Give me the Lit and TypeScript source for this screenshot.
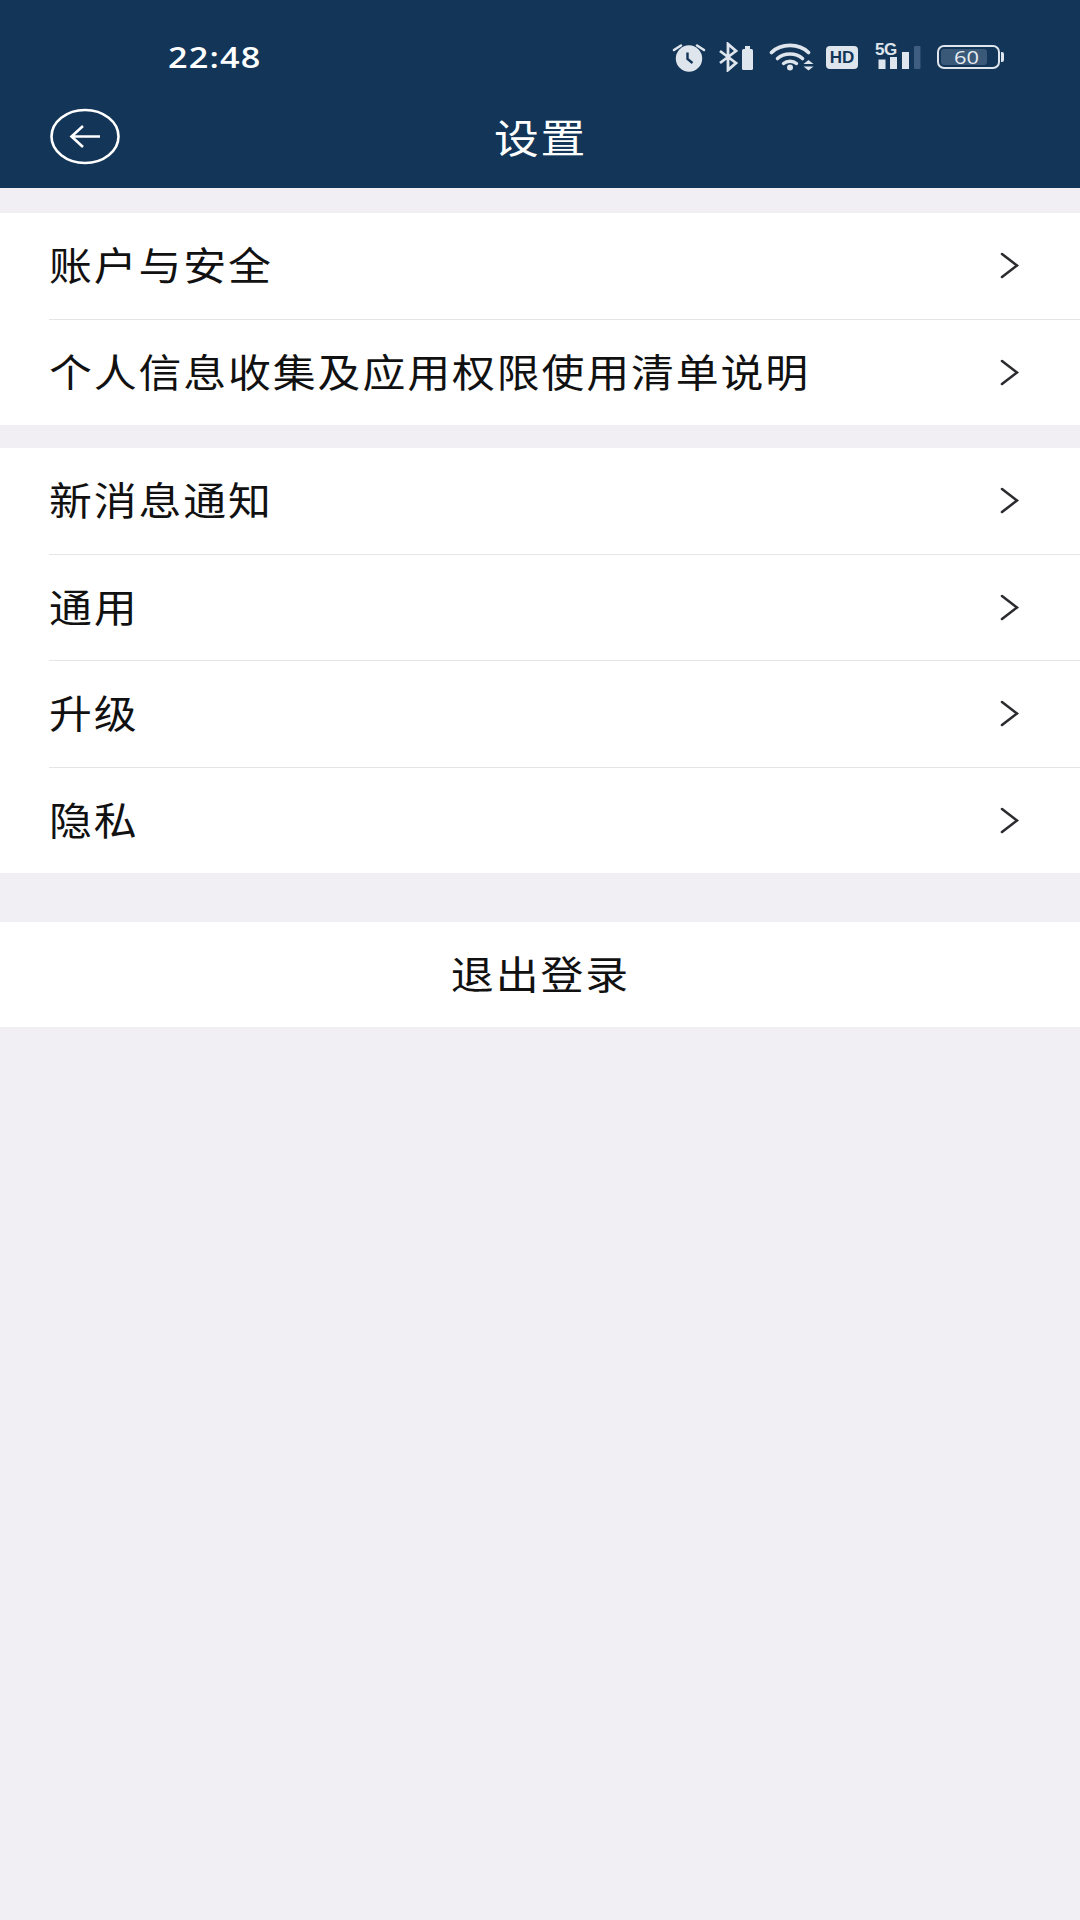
import { LitElement, html, css, svg } from 'lit';
import { customElement } from 'lit/decorators.js';

const chevron = html`<svg class="chevron" width="19" height="27" viewBox="0 0 19 27">
  <path d="M2 2 L17 13.5 L2 25" fill="none" stroke="#2c2c30" stroke-width="2.6" stroke-linecap="round" stroke-linejoin="miter"/>
</svg>`;

const alarm = svg`<svg width="34" height="30" viewBox="0 0 34 30">
  <path d="M2 8 L9 3.5 M32 8 L25 3.5" stroke="#dfe5ec" stroke-width="2.6" stroke-linecap="round"/>
  <circle cx="17" cy="16.5" r="13.2" fill="#dfe5ec"/>
  <path d="M15.5 10.5 V17 L20.5 21" fill="none" stroke="#123558" stroke-width="2.4"/>
</svg>`;

const bluetooth = svg`<svg width="36" height="30" viewBox="0 0 36 30">
  <path d="M2 9 L18 21 L10 28 V2 L18 9 L2 21" fill="none" stroke="#dfe5ec" stroke-width="2.8"/>
  <rect x="24" y="7" width="11" height="21" rx="1.5" fill="#dfe5ec"/>
  <rect x="27" y="4" width="5" height="4" fill="#dfe5ec"/>
</svg>`;

const wifi = svg`<svg width="46" height="28" viewBox="0 0 46 28">
  <path d="M3.5 9.5 C13 0 31 0 40.5 9.5" fill="none" stroke="#dfe5ec" stroke-width="3.8" stroke-linecap="round"/>
  <path d="M9.5 15.5 C16 9.5 28 9.5 34.5 15.5" fill="none" stroke="#dfe5ec" stroke-width="3.6" stroke-linecap="round"/>
  <path d="M15.5 20.5 C19 17.5 25 17.5 28.5 20.5" fill="none" stroke="#dfe5ec" stroke-width="3.4" stroke-linecap="round"/>
  <circle cx="22" cy="24.5" r="3" fill="#dfe5ec"/>
  <path d="M35.5 21 L40.5 17 L45.5 21 Z M35.5 23.5 L45.5 23.5 L40.5 27.5 Z" fill="#dfe5ec"/>
</svg>`;

// four signal bars, the last one is the unreached level
const signal = svg`<svg width="46" height="25" viewBox="0 0 46 25">
  <rect x="3.5" y="15.5" width="7" height="9.5" fill="#dfe5ec"/>
  <rect x="15" y="13" width="7" height="12" fill="#dfe5ec"/>
  <rect x="27" y="8" width="7" height="17" fill="#dfe5ec"/>
  <rect x="39" y="2" width="6.5" height="23" rx="1" fill="#3f5d7e"/>
</svg>`;

@customElement('app-root')
export class AppRoot extends LitElement {
  static styles = css`
    :host {
      display: block;
      width: 1080px;
      height: 1920px;
      background: #f1eff3;
      font-family: 'Noto Sans CJK SC', 'Liberation Sans', sans-serif;
      overflow: hidden;
    }
    .header {
      height: 188px;
      background: #123558;
      color: #fff;
    }
    .status {
      height: 92px;
      padding: 22px 76px 0 168px;
      box-sizing: border-box;
      display: flex;
      align-items: center;
      justify-content: space-between;
    }
    .time {
      font: 600 29px/1 'Open Sans', sans-serif;
      letter-spacing: 1px;
      color: #fff;
      margin-top: -2px;
      transform: scaleX(1.18);
      transform-origin: left center;
    }
    .icons {
      display: flex;
      align-items: center;
    }
    .icons svg { display: block; }
    .alarm { margin-right: 12px; }
    .bt { margin-right: 14px; }
    .wifi { margin-right: 12px; }
    .hd {
      width: 32px;
      height: 23px;
      border-radius: 4px;
      background: #dfe5ec;
      color: #123558;
      font: 700 17px/23px 'Liberation Sans', sans-serif;
      text-align: center;
      margin-right: 17px;
    }
    .net {
      position: relative;
      width: 46px;
      height: 26px;
      margin-right: 16px;
    }
    .net-label {
      position: absolute;
      left: 0;
      top: -1px;
      font: 700 17px/14px 'Liberation Sans', sans-serif;
      letter-spacing: -0.5px;
      color: #dfe5ec;
    }
    .net svg { position: absolute; left: 0; bottom: 1px; }
    .battery {
      display: flex;
      align-items: center;
    }
    .battery-body {
      width: 63px;
      height: 24px;
      box-sizing: border-box;
      border: 2px solid #dfe5ec;
      border-radius: 7px;
      padding: 2px;
    }
    .battery-fill {
      width: 84%;
      height: 100%;
      border-radius: 3px;
      background: #3a5878;
      position: relative;
    }
    .battery-text {
      position: absolute;
      left: 13px;
      top: -1px;
      font: 400 19px/18px 'Open Sans', sans-serif;
      color: #e6ebf0;
      transform: scaleX(1.15);
      transform-origin: left center;
    }
    .battery-tip {
      width: 3px;
      height: 10px;
      margin-left: 1px;
      background: #dfe5ec;
      border-radius: 0 2px 2px 0;
    }
    .nav {
      height: 96px;
      display: grid;
      grid-template-columns: 1fr auto 1fr;
      align-items: center;
      padding: 0 50px;
      box-sizing: border-box;
    }
    .back { display: block; margin-top: -8px; }
    .title {
      font-size: 40px;
      line-height: 1;
      letter-spacing: 1.5px;
      margin-right: -1.5px;
      margin-top: -8px;
      transform: scaleX(1.12);
    }
    .group {
      background: #fff;
      padding-left: 49px;
    }
    .group.account { margin-top: 25px; }
    .group.general { margin-top: 23px; }
    .row {
      height: 106.5px;
      display: flex;
      align-items: center;
      justify-content: space-between;
      padding-right: 61px;
      box-sizing: border-box;
      border-bottom: 1px solid #e5e5e7;
    }
    .row:last-child { height: 105.5px; border-bottom: none; }
    .label {
      font-size: 39px;
      line-height: 1;
      letter-spacing: 1.7px;
      color: #111;
      white-space: nowrap;
      margin-top: -4px;
      transform: scaleX(1.1);
      transform-origin: left center;
    }
    .logout {
      margin-top: 49px;
      height: 105px;
      background: #fff;
      display: flex;
      align-items: center;
      justify-content: center;
      color: #111;
    }
    .logout span {
      font-size: 39px;
      line-height: 1;
      letter-spacing: 1.7px;
      margin-right: -1.7px;
      margin-top: -4px;
      transform: scaleX(1.1);
    }
  `;

  private rows(kind: string, items: string[]) {
    return html`<div class="group ${kind}">
      ${items.map((t) => html`<div class="row"><span class="label">${t}</span>${chevron}</div>`)}
    </div>`;
  }

  render() {
    return html`
      <div class="header">
        <div class="status">
          <span class="time">22:48</span>
          <div class="icons">
            <span class="alarm">${alarm}</span>
            <span class="bt">${bluetooth}</span>
            <span class="wifi">${wifi}</span>
            <span class="hd">HD</span>
            <div class="net">${signal}<span class="net-label">5G</span></div>
            <div class="battery">
              <div class="battery-body">
                <div class="battery-fill"><span class="battery-text">60</span></div>
              </div>
              <div class="battery-tip"></div>
            </div>
          </div>
        </div>
        <div class="nav">
          <svg class="back" width="70" height="57" viewBox="0 0 70 57">
            <ellipse cx="35" cy="28.5" rx="33.5" ry="26.5" fill="none" stroke="#fff" stroke-width="2.6"/>
            <path d="M50 28.5 H22 M33 18 L21.5 28.5 L33 39" fill="none" stroke="#fff" stroke-width="2.6"/>
          </svg>
          <span class="title">设置</span>
          <span></span>
        </div>
      </div>
      ${this.rows('account', ['账户与安全', '个人信息收集及应用权限使用清单说明'])}
      ${this.rows('general', ['新消息通知', '通用', '升级', '隐私'])}
      <div class="logout"><span>退出登录</span></div>
    `;
  }
}
